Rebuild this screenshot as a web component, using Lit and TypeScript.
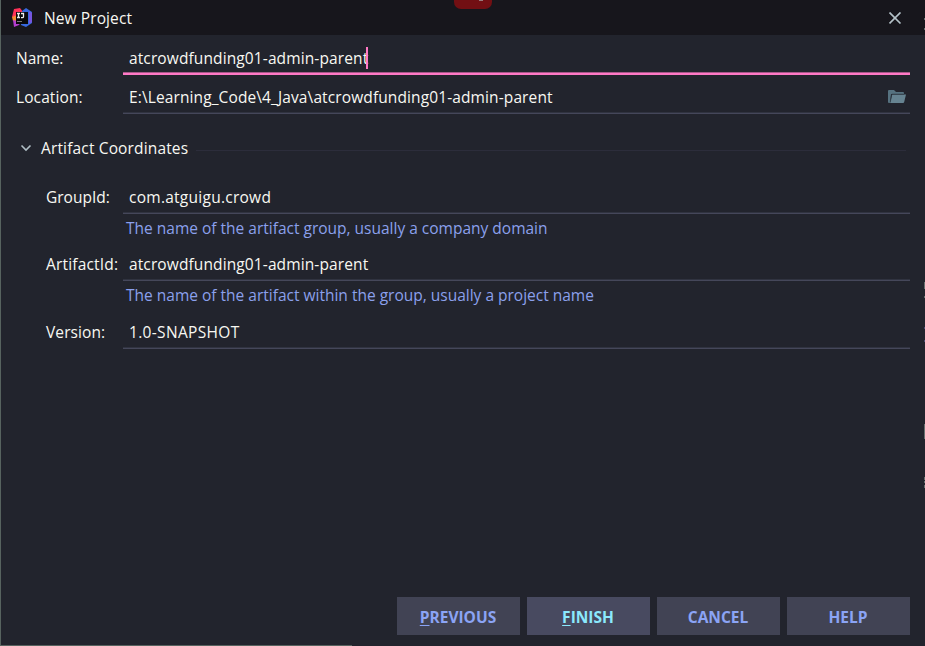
import { LitElement, html, css } from "lit";
import { customElement, property } from "lit/decorators.js";

@customElement("form-row")
class FormRow extends LitElement {
  @property() label = "";
  @property() value = "";
  @property({ type: Boolean }) active = false;
  @property({ type: Boolean }) browse = false;

  static styles = css`
    :host { display: flex; height: 39px; box-sizing: border-box; white-space: pre; }
    .label { width: calc(var(--label-width, 108px) - 1px); flex: none; line-height: 22px; align-self: flex-end; margin-bottom: 6px; letter-spacing: var(--label-spacing, 0.1px); }
    .field { flex: 1; display: flex; align-items: flex-end; box-sizing: border-box; border-bottom: 1px solid #45475a; padding: 0 4px 0 6px; box-shadow: inset 0 -1px #303340; }
    .value { line-height: 22px; margin-bottom: 5px; letter-spacing: var(--value-spacing, 0.113px); }
    .active { border-bottom: 2px solid #ff79c6; box-shadow: inset 0 -1px #a75888; }
    .active .value { margin-bottom: 4px; }
    .caret { width: 2px; height: 22px; background: #ff79c6; margin: 0 0 4px -2.5px; }
    .folder { margin: 0 0 9px auto; display: block; }
  `;

  render() {
    return html`
      <div class="label">${this.label}</div>
      <div class="field ${this.active ? "active" : ""}">
        <span class="value">${this.value}</span>
        ${this.active ? html`<span class="caret"></span>` : ""}
        ${this.browse
          ? html`<svg class="folder" width="18" height="15" viewBox="0 0 18 15">
              <path fill="#567280" d="M0 2Q0 1 1 1H6L8 3H15Q16 3 16 4V5H3L2 14H1Q0 14 0 13Z" />
              <path fill="#668391" d="M4.2 5.6H18L16.2 13Q16 14 15 14H2Z" />
              <path fill="none" stroke="#2c3a44" stroke-width=".7" d="M2.2 13.5L3.8 5.2H16" />
            </svg>`
          : ""}
      </div>
    `;
  }
}

@customElement("app-root")
class AppRoot extends LitElement {
  static styles = css`
    :host { display: flex; flex-direction: column; box-sizing: border-box; position: relative; width: 925px; height: 646px; overflow: hidden;
      background: #22242d; border-left: 1px solid #57635f; color: #f8f8f2; font: 15.5px "Open Sans", "Noto Sans", sans-serif; }
    .title { height: 35px; flex: none; display: flex; align-items: center; background: #17161c; padding: 0 23px 0 11px; }
    .logo { width: 20px; height: 20px; margin-right: 12px; }
    .name { line-height: 22px; padding-top: 1px; letter-spacing: 0.1px; }
    .close { margin: 1px 0 0 auto; }
    .badge { position: absolute; left: 453px; top: 0; width: 38px; height: 9px; border-radius: 0 0 7px 7px; background: #720f13; }
    .badge::after { content: ""; position: absolute; left: 25px; top: 0; width: 4px; height: 1px; background: #98797b; }
    .main { flex: 1; padding: 0 15px; display: flex; flex-direction: column; }
    .first { height: 40px; --label-spacing: 0px; }
    .section { display: flex; align-items: center; height: 22px; margin: 23px 4px 0 4px; }
    .chevron { margin-right: 9px; }
    .section span { letter-spacing: 0.15px; }
    .rule { flex: 1; height: 1px; margin: 4px 0 0 8px; background: #2c2d3b; }
    .coords { padding-left: 30px; --label-width: 78px; }
    .group { height: 55px; --label-spacing: 0px; --value-spacing: 0.26px; }
    .artifact { height: 37px; --label-spacing: 0.18px; }
    .version { height: 38px; --value-spacing: 0.33px; }
    .hint { height: 30px; line-height: 28px; padding-left: 80px; color: #8ba0ec; white-space: pre; }
    .buttons { display: flex; justify-content: flex-end; gap: 7px; margin-top: auto; padding-bottom: 11px; }
    .button { width: 123px; height: 38px; display: flex; align-items: center; justify-content: center; background: #414354; color: #8ba4f5; font-weight: 700; padding: 2px 1px 0 0; box-sizing: border-box; }
    .primary { background: #484a60; color: #8be9fd; }
    .key { text-decoration: underline; text-decoration-thickness: 1px; text-underline-offset: 2px; }
    .edge { position: absolute; left: 0; bottom: 0; width: 351px; height: 1px; background: #57635f; }
    .backdrop { position: absolute; right: 0; top: 0; width: 1px; height: 646px; }
  `;

  render() {
    return html`
      <div class="title">
        <svg class="logo" viewBox="0 0 20 20">
          <path fill="#ff3158" d="M2 1L8 0 11 4 8 11 0 9Z" />
          <path fill="#f58b31" d="M0 9L5 7V14L1 13Z" />
          <path fill="#b43dce" d="M1 12L9 14 7 17 2 19Z" />
          <path fill="#3869df" d="M10 3L14 0 20 4V15L14 19 9 17Z" />
          <path fill="#7756df" d="M17 3L20 5V14L17 16Z" />
          <rect x="4" y="4" width="12" height="12" fill="#09090b" />
          <path fill="none" stroke="#eee" stroke-width="1.3" d="M5 5.5H8M6.5 5.5V9.5M5 9.5H8M9 5.5H11.5V8.5Q11.5 9.7 10.3 9.7H9" />
          <path stroke="#777" d="M5 13.5H10" />
        </svg>
        <span class="name">New Project</span>
        <svg class="close" width="13" height="13" viewBox="0 0 13 13">
          <path d="M.5 .5L11.5 11.5M11.5 .5L.5 11.5" stroke="#b5c2c9" stroke-width="1.7" />
        </svg>
      </div>
      <div class="badge"></div>
      <div class="main">
        <form-row class="first" label="Name:" value="atcrowdfunding01-admin-parent" active></form-row>
        <form-row class="location" label="Location:" value="E:\\Learning_Code\\4_Java\\atcrowdfunding01-admin-parent" browse></form-row>
        <div class="section">
          <svg class="chevron" width="12" height="8" viewBox="0 0 12 8">
            <path d="M1.5 1.5L6 6L10.5 1.5" fill="none" stroke="#b0bec5" stroke-width="1.6" />
          </svg>
          <span>Artifact Coordinates</span>
          <div class="rule"></div>
        </div>
        <div class="coords">
          <form-row class="group" label="GroupId:" value="com.atguigu.crowd"></form-row>
          <div class="hint">The name of the artifact group, usually a company domain</div>
          <form-row class="artifact" label="ArtifactId:" value="atcrowdfunding01-admin-parent"></form-row>
          <div class="hint">The name of the artifact within the group, usually a project name</div>
          <form-row class="version" label="Version:" value="1.0-SNAPSHOT"></form-row>
        </div>
        <div class="buttons">
          <div class="button"><span><span class="key">P</span>REVIOUS</span></div>
          <div class="button primary"><span><span class="key">F</span>INISH</span></div>
          <div class="button">CANCEL</div>
          <div class="button">HELP</div>
        </div>
      </div>
      <div class="edge"></div>
      <svg class="backdrop" viewBox="0 0 1 646">
        <path d="M.5 18V20M.5 28V30M.5 282V289M.5 296V298M.5 424V439M.5 477V480M.5 481V483M.5 485V488" stroke="#66706f" />
        <path d="M.5 327V329M.5 340V342" stroke="#4b4c70" />
      </svg>
    `;
  }
}
